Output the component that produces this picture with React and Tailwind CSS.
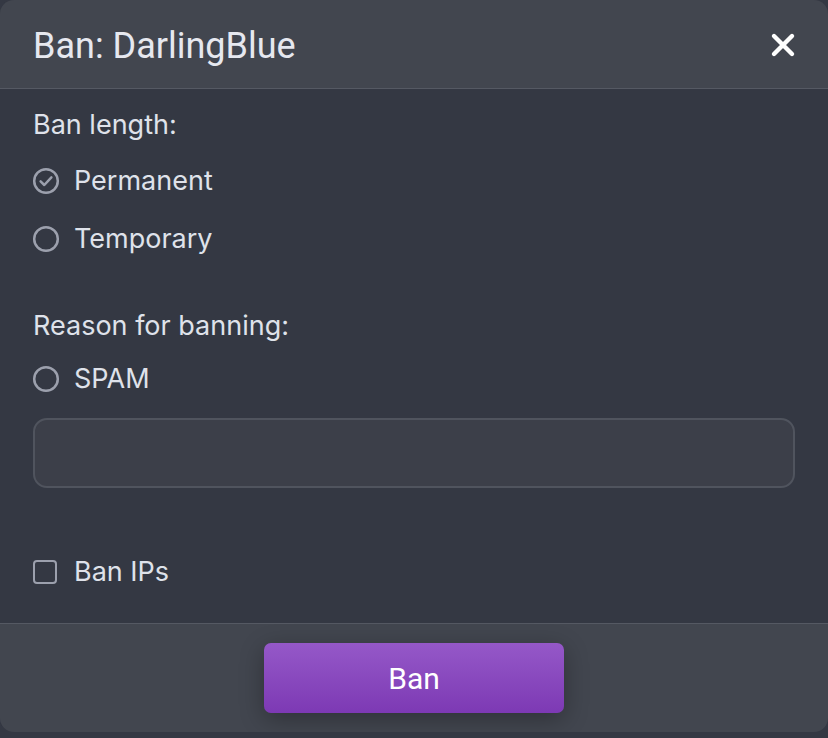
import React from "react";

function Radio({ checked }) {
  return (
    <svg width="28" height="28" viewBox="0 0 28 28" className="shrink-0">
      <circle cx="14" cy="14" r="11.8" fill="none" stroke="#9ca0ad" strokeWidth="2.5" />
      {checked && (
        <path d="M8.6 14.4 L12.3 18 L19.4 10.4" fill="none" stroke="#9ca0ad" strokeWidth="2.5" strokeLinecap="round" strokeLinejoin="round" />
      )}
    </svg>
  );
}

function Row({ children, checked }) {
  return (
    <div className="flex items-center h-[58px] gap-[14px]">
      <div className="ml-[-1px]"><Radio checked={checked} /></div>
      <span className="text-[27px] leading-[36px] text-[#dfe2ea]">{children}</span>
    </div>
  );
}

export default function App() {
  return (
    <div className="w-[828px] h-[738px] bg-[#343843] overflow-hidden" style={{ fontFamily: "Inter, 'Noto Sans', sans-serif" }}>
      <div className="w-[828px] h-[732px] rounded-[14px] overflow-hidden flex flex-col bg-[#343843]">
        <div className="h-[89px] bg-[#42464f] flex items-center justify-between pl-[33px] pr-[32px] border-b-[1.5px] border-[#555963] shrink-0">
          <span className="text-[36px] leading-[40px] mt-[3px] text-[#e6e8ef]" style={{ fontFamily: "Roboto, 'Liberation Sans', sans-serif" }}>Ban: DarlingBlue</span>
          <svg width="26" height="26" viewBox="0 0 26 26" className="mt-[1px]">
            <path d="M4 4 L22 22 M22 4 L4 22" stroke="#ffffff" strokeWidth="4.4" strokeLinecap="round" />
          </svg>
        </div>
        <div className="flex-1 px-[33px] flex flex-col">
          <div className="mt-[18px] text-[27px] leading-[36px] text-[#dfe2ea]">Ban length:</div>
          <div className="mt-[9px]">
            <Row checked>Permanent</Row>
            <Row>Temporary</Row>
          </div>
          <div className="mt-[40px] text-[27px] leading-[36px] text-[#dfe2ea]">Reason for banning:</div>
          <div className="mt-[6px]"><Row>SPAM</Row></div>
          <div className="mt-[10px] h-[70px] rounded-[14px] border-[2px] border-[#50545e] bg-[#3c3f49]"></div>
          <div className="mt-[55px] flex items-center h-[58px] gap-[17px]">
            <div className="w-[24px] h-[24px] rounded-[4px] border-[2.5px] border-[#9ca0ad]"></div>
            <span className="text-[27px] leading-[36px] text-[#dfe2ea]">Ban IPs</span>
          </div>
        </div>
        <div className="h-[109px] bg-[#42464f] border-t-[1.5px] border-[#555963] flex justify-center pt-[19px] shrink-0">
          <button className="w-[300px] h-[70px] rounded-[7px] bg-gradient-to-b from-[#9558c8] to-[#7d39b4] text-white text-[30px] shadow-[0_6px_24px_rgba(0,0,0,0.3)]" style={{ fontFamily: "Roboto, 'Liberation Sans', sans-serif" }}>
            Ban
          </button>
        </div>
      </div>
    </div>
  );
}
